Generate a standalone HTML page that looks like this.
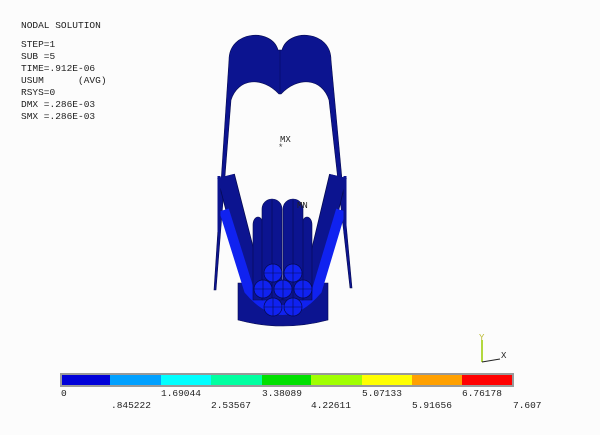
<!DOCTYPE html>
<html><head><style>
body{margin:0;width:600px;height:435px;background:#fcfcfc;overflow:hidden;font-family:"Liberation Mono",monospace;}
.t{position:absolute;font-size:9.5px;color:#222;white-space:pre;line-height:12px}
</style></head><body>
<div class="t" style="left:21px;top:20px">NODAL SOLUTION</div>
<div class="t" style="left:21px;top:39px">STEP=1
SUB =5
TIME=.912E-06
USUM      (AVG)
RSYS=0
DMX =.286E-03
SMX =.286E-03</div>
<svg width="600" height="435" style="position:absolute;left:0;top:0">
<g stroke="#050a50" stroke-width="0.6">
<!-- top shell -->
<path d="M229,60 C229,30 272,28 278,50 L282,50 C288,28 331,30 331,60 L352,288 L350,288 L329,100 C322,78 298,76 281,94 L279,94 C262,76 238,78 231,100 L216,290 L214,290 Z" fill="#0c1490"/>
<path d="M280,50 L280,94" stroke="#050a60"/>
<!-- bottom block -->
<path d="M238,283 L328,283 L328,320 Q283,332 238,320 Z" fill="#0c1490"/>
</g>
<!-- V arms -->
<path d="M226,176 L254,285 Q283,322 312,285 L338,176" fill="none" stroke="#050a50" stroke-width="18"/>
<path d="M226,176 L254,285 Q283,322 312,285 L338,176" fill="none" stroke="#0c1490" stroke-width="16.5"/>
<path d="M224,210 L249,290 Q283,330 317,290 L341,210" fill="none" stroke="#1022f0" stroke-width="10"/>
<path d="M219,176 L219,232 M345,176 L345,232" stroke="#0c1490" stroke-width="3"/>
<g stroke="#050a50" stroke-width="0.6">
<!-- rods -->
<path d="M253,225 a5,8 0 0 1 10,0 L263,300 L253,300 Z" fill="#0c1490"/>
<path d="M302,225 a5,8 0 0 1 10,0 L312,300 L302,300 Z" fill="#0c1490"/>
<path d="M262,209 a10,10 0 0 1 20,0 L282,300 L262,300 Z" fill="#0c1490"/>
<path d="M283,209 a10,10 0 0 1 20,0 L303,300 L283,300 Z" fill="#0c1490"/>
<line x1="272" y1="200" x2="272" y2="300"/><line x1="293" y1="200" x2="293" y2="300"/>
</g>
<g fill="#1022f0" stroke="#050a50" stroke-width="0.7">
<circle cx="273" cy="273" r="9"/><circle cx="293" cy="273" r="9"/>
<circle cx="263" cy="289" r="9"/><circle cx="283" cy="289" r="9"/><circle cx="303" cy="289" r="9"/>
<circle cx="273" cy="307" r="9"/><circle cx="293" cy="307" r="9"/>
</g>
<g stroke="#050a50" stroke-width="0.6">
<path d="M264,273h18M273,264v18M284,273h18M293,264v18M254,289h18M263,280v18M274,289h18M283,280v18M294,289h18M303,280v18M264,307h18M273,298v18M284,307h18M293,298v18"/>
</g>
<text x="280" y="142" font-size="9" font-family="Liberation Mono" fill="#222">MX</text>
<text x="278" y="150" font-size="9" fill="#444">*</text>
<text x="297" y="208" font-size="9" font-family="Liberation Mono" fill="#222">MN</text>
<!-- triad -->
<line x1="482" y1="340" x2="482" y2="362" stroke="#9c0" stroke-width="1.5"/>
<line x1="482" y1="362" x2="500" y2="359" stroke="#222" stroke-width="1"/>
<text x="479" y="340" font-size="9" fill="#bb3" font-family="Liberation Mono">Y</text>
<text x="501" y="358" font-size="9" fill="#222" font-family="Liberation Mono">X</text>
<!-- colorbar -->
<rect x="60" y="373" width="454" height="14" fill="#999"/>
<rect x="62" y="375" width="48" height="10" fill="#0000d8"/>
<rect x="110" y="375" width="51" height="10" fill="#00a0ff"/>
<rect x="161" y="375" width="50" height="10" fill="#00ffff"/>
<rect x="211" y="375" width="51" height="10" fill="#00ffa0"/>
<rect x="262" y="375" width="49" height="10" fill="#00e000"/>
<rect x="311" y="375" width="51" height="10" fill="#a0ff00"/>
<rect x="362" y="375" width="50" height="10" fill="#ffff00"/>
<rect x="412" y="375" width="50" height="10" fill="#ffa000"/>
<rect x="462" y="375" width="50" height="10" fill="#ff0000"/>
<g font-size="9.5" font-family="Liberation Mono" fill="#222">
<text x="61" y="396">0</text><text x="161" y="396">1.69044</text><text x="262" y="396">3.38089</text><text x="362" y="396">5.07133</text><text x="462" y="396">6.76178</text>
<text x="111" y="408">.845222</text><text x="211" y="408">2.53567</text><text x="311" y="408">4.22611</text><text x="412" y="408">5.91656</text><text x="513" y="408">7.607</text>
</g>
</svg>
</body></html>
